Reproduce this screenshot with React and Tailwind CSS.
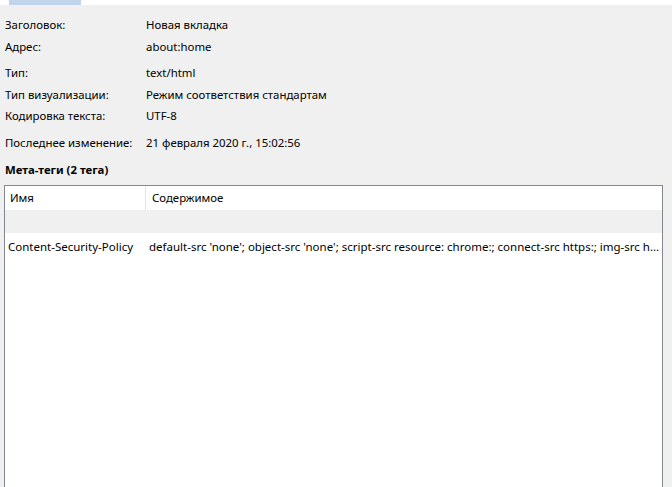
import React from 'react';

const info = [
  { label: 'Заголовок:', value: 'Новая вкладка', cls: 'h-[22px]' },
  { label: 'Адрес:', value: 'about:home', cls: 'h-[22px]' },
  { label: 'Тип:', value: 'text/html', cls: 'h-[21.5px] mt-[4px]' },
  { label: 'Тип визуализации:', value: 'Режим соответствия стандартам', cls: 'h-[21.5px]' },
  { label: 'Кодировка текста:', value: 'UTF-8', cls: 'h-[21.5px]' },
  { label: 'Последнее изменение:', value: '21 февраля 2020 г., 15:02:56', cls: 'h-[22px] mt-[5px]' },
];

export default function App() {
  return (
    <div className="w-[672px] h-[487px] overflow-hidden bg-[#f0f0f0] text-[12px] text-black font-['Noto_Sans',sans-serif]">
      {/* tab strip, labels cut off above the window */}
      <div className="h-[5px] bg-white flex overflow-hidden">
        <div className="ml-[9px] w-[72px] bg-[#c1d4ee]" />
      </div>

      <div className="pt-[9px]">
        {info.map((row) => (
          <div key={row.label} className={`flex items-center text-[11.4px] ${row.cls}`}>
            <div className="w-[146px] shrink-0 pl-[5px]">{row.label}</div>
            <div>{row.value}</div>
          </div>
        ))}
        <div className="h-[22px] mt-[5px] flex items-center pl-[5px] font-bold text-[11.4px]">Мета-теги (2 тега)</div>
      </div>

      <div className="mt-[4.5px] ml-[4px] w-[659px] h-[400px] border border-[#828790] bg-white">
        <div className="h-[24px] flex items-center bg-white text-[11.4px]">
          <div className="w-[141px] shrink-0 h-full flex items-center pl-[5px] border-r border-[#e5e5e5]">Имя</div>
          <div className="pl-[6px]">Содержимое</div>
        </div>
        <div className="h-[23px] bg-[#f0f0f0]" />
        <div className="h-[27px] flex items-center text-[11.5px]">
          <div className="w-[141px] shrink-0 pl-[3px] whitespace-nowrap">Content-Security-Policy</div>
          <div className="flex-1 min-w-0 pl-[3px] whitespace-nowrap overflow-hidden">
            default-src 'none'; object-src 'none'; script-src resource: chrome:; connect-src https:; img-src h…
          </div>
        </div>
      </div>
    </div>
  );
}
